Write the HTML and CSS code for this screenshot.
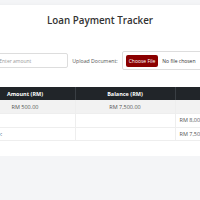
FILE: index.html
```html
<!DOCTYPE html>
<html lang="en">
<head>
    <meta charset="UTF-8">
    <meta name="viewport" content="width=device-width, initial-scale=1.0">
    <title>Loan Payment Tracker</title>
    <link rel="stylesheet" href="styles.css">
</head>
<body>
    <div class="page">
        <div class="tracker">
            <h1 class="title">Loan Payment Tracker</h1>

            <!-- Payment form -->
            <form class="payment-form">
                <input class="amount-input" type="text" placeholder="Enter amount">
                <label class="upload-label">Upload Document:</label>
                <div class="file-box">
                    <input class="file-input" type="file">
                </div>
            </form>

            <!-- Payment history -->
            <table class="payment-table">
                <thead>
                    <tr>
                        <th class="col-date">Date</th>
                        <th class="col-amount">Amount (RM)</th>
                        <th class="col-balance">Balance (RM)</th>
                        <th class="col-doc">Document</th>
                    </tr>
                </thead>
                <tbody>
                    <tr class="striped">
                        <td>01/05/2024</td>
                        <td>RM 500.00</td>
                        <td>RM 7,500.00</td>
                        <td>-</td>
                    </tr>
                    <tr class="summary">
                        <td class="summary-end">Total Loan:</td>
                        <td></td>
                        <td></td>
                        <td class="summary-value">RM 8,000.00</td>
                    </tr>
                    <tr class="summary">
                        <td></td>
                        <td class="summary-label">Balance:</td>
                        <td></td>
                        <td class="summary-value">RM 7,500.00</td>
                    </tr>
                </tbody>
            </table>
        </div>
    </div>
</body>
</html>
```

FILE: styles.css
```css
* {
    margin: 0;
    padding: 0;
    box-sizing: border-box;
}

body {
    font-family: 'Open Sans', 'Noto Sans', sans-serif;
    background: #f4f5f7;
    overflow: hidden;
}

.page {
    display: flex;
    justify-content: center;
    width: 200px;
    padding-top: 5px;
}

.tracker {
    flex-shrink: 0;
    width: 500px;
    background: #ffffff;
    padding: 8px 25px 15px;
    box-shadow: 0 2px 6px rgba(0, 0, 0, 0.08);
}

.title {
    font-size: 9.8px;
    line-height: 15px;
    font-weight: 600;
    color: #333333;
    text-align: center;
}

.payment-form {
    display: flex;
    justify-content: center;
    align-items: center;
    gap: 4px;
    margin-top: 23px;
    height: 19px;
}

.amount-input {
    width: 74px;
    height: 15px;
    padding: 0 4px;
    border: 1px solid #dddddd;
    border-radius: 2px;
    font-family: inherit;
    font-size: 5px;
    color: #333333;
    outline: none;
}

.amount-input::placeholder {
    color: #999999;
}

.upload-label {
    font-size: 5.2px;
    color: #555555;
}

.file-box {
    display: flex;
    align-items: center;
    flex-shrink: 0;
    width: 84px;
    height: 19px;
    padding: 0 3px;
    border: 1px solid #dddddd;
    border-radius: 2px;
}

.file-input {
    font-family: inherit;
    font-size: 5px;
    color: #333333;
}

.file-input::file-selector-button {
    height: 12px;
    padding: 0 3px;
    margin-right: 4px;
    border: none;
    border-radius: 2px;
    background: #8b0000;
    color: #ffffff;
    font-family: inherit;
    font-size: 5px;
}

.payment-table {
    width: 100%;
    margin-top: 17px;
    border-collapse: collapse;
    table-layout: fixed;
    font-size: 5.5px;
}

.col-date { width: 100px; }
.col-amount { width: 100px; }
.col-balance { width: 100px; }

.payment-table th {
    height: 13px;
    background: #212529;
    color: #ffffff;
    font-weight: 700;
    text-align: center;
    border-right: 1px solid #3a3f44;
}

.payment-table td {
    height: 13.5px;
    color: #555555;
    text-align: center;
    border-bottom: 1px solid #eeeeee;
    border-right: 1px solid #eeeeee;
}

.payment-table tr.striped td {
    background: #f2f2f2;
}

.payment-table td.summary-end {
    text-align: right;
    padding-right: 5px;
    color: #333333;
}

.payment-table td.summary-label {
    text-align: left;
    padding-left: 5px;
    color: #333333;
}

.payment-table td.summary-value {
    text-align: left;
    padding-left: 4px;
}
```
